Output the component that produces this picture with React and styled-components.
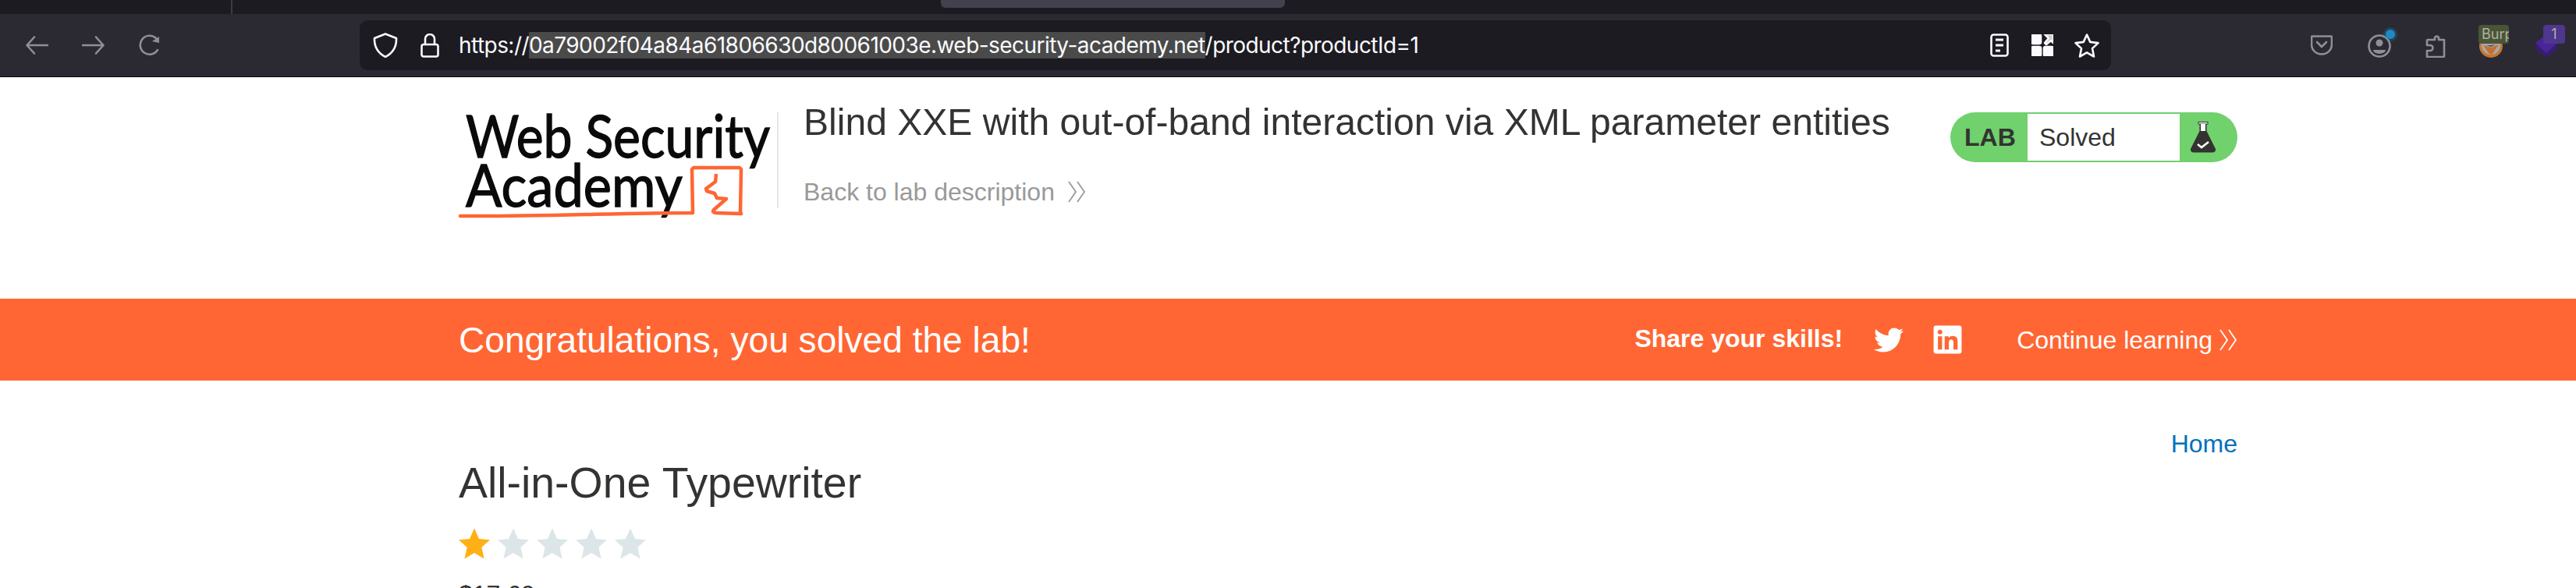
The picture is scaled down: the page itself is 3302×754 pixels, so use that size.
import React from 'react';
import styled, { createGlobalStyle } from 'styled-components';
import { FaTwitter, FaLinkedin } from 'react-icons/fa';

const Global = createGlobalStyle`
  html, body { margin: 0; padding: 0; background: #fff; height: 754px; overflow: hidden; }
  * { box-sizing: border-box; }
`;
const Page = styled.div`
  width: 3302px; height: 754px; overflow: hidden; background: #fff;
  font-family: "Liberation Sans", Arial, sans-serif; color: #333332;
`;
const TabStrip = styled.div`
  height: 18px; background: #1c1b22; display: flex; align-items: flex-start;
`;
const TabDivider = styled.div`
  width: 2px; height: 18px; margin-left: 296px; background: #3c3b44;
`;
const ActiveTab = styled.div`
  width: 441px; height: 10px; margin-left: 908px; background: #42414d; border-radius: 0 0 6px 6px;
`;
const Toolbar = styled.div`
  height: 81px; background: #2b2a33; border-bottom: 1px solid #0c0c0d;
  display: flex; align-items: center; position: relative;
`;
const NavIcon = styled.svg`
  flex: none; display: block; margin-left: ${p => p.$ml || 0}px; color: ${p => p.$c || '#8f8f94'};
  fill: none; stroke: currentColor; stroke-width: 2.6; stroke-linecap: round; stroke-linejoin: round;
`;
const AccountIcon = styled(NavIcon)`
  margin-top: 8px;
`;
const UrlBar = styled.div`
  width: 2245px; height: 64px; margin-left: 255px; background: #1c1b22; border-radius: 10px;
  display: flex; align-items: center; color: #fbfbfe; flex: none;
`;
const UrlText = styled.div`
  margin-left: 25px; font: 400 28px/33px Inter, sans-serif; white-space: pre; letter-spacing: -0.55px;
`;
const Selected = styled.span`
  background: #4a4a4a;
`;
const UrlTools = styled.div`
  margin-left: auto; padding-right: 15px; display: flex; align-items: center;
`;
const ExtSlot = styled.div`
  position: relative; flex: none; margin-left: ${p => p.$ml}px; width: ${p => p.$w}px; height: 44px;
`;
const ExtBadge = styled.div`
  position: absolute; top: -4px; left: ${p => p.$l}px; width: ${p => p.$w}px; height: 24px; overflow: hidden;
  background: ${p => p.$bg}; color: #aeb0a8; border-radius: 4px; padding-left: ${p => p.$center ? 0 : 4}px;
  font: 400 18px/24px Inter, sans-serif; white-space: nowrap;
  text-align: ${p => p.$center ? 'center' : 'left'};
`;
const ExtArt = styled.svg`
  position: absolute; top: 8px; left: ${p => p.$l}px; display: block;
`;
const Dot = styled.div`
  position: absolute; width: 12px; height: 12px; border-radius: 50%; top: 2px; right: -5px;
  background: #1d8ac4; box-shadow: 0 0 0 3px rgba(29,138,196,.25);
`;
const Container = styled.div`
  width: 2280px; margin: 0 0 0 588px;
`;
const LabHeader = styled.div`
  height: 284px; display: flex; align-items: flex-start;
`;
const LogoSvg = styled.svg`
  flex: none; display: block; margin: 42px 0 0 -4px;
`;
const LogoText = styled.text`
  font-family: Lato, "Noto Sans", sans-serif; font-weight: 400; fill: #0a0a0a; stroke: #0a0a0a; stroke-width: 1.4;
`;
const Divider = styled.div`
  flex: none; width: 2px; height: 123px; margin: 45px 0 0 8px; background: #e6e6e6;
`;
const TitleCol = styled.div`
  flex: none; width: 1440px; margin-left: 32px; padding-top: 31px;
`;
const LabTitle = styled.h2`
  margin: 0; font: 400 48.070px/52px "Liberation Sans", sans-serif; color: #333332; white-space: nowrap;
`;
const BackLink = styled.div`
  margin-top: 45px; display: flex; align-items: center; font: 400 32px/38px "Liberation Sans", sans-serif; color: #999;
`;
const Chevrons = styled.svg`
  display: block; margin-left: ${p => p.$ml}px; flex: none; fill: none; stroke: currentColor; stroke-width: 1.8;
`;
const LabWidget = styled.div`
  margin: 45px 0 0 auto; width: 368px; height: 64px; background: #70d16d; border-radius: 32px;
  display: flex; align-items: stretch; flex: none;
`;
const LabLabel = styled.div`
  width: 99px; padding-left: 18px; font: 700 32px/64px "Liberation Sans", sans-serif;
`;
const LabStatus = styled.div`
  width: 195px; margin: 2px 0; background: #fff; padding-left: 15px; font: 400 32px/60px "Liberation Sans", sans-serif;
`;
const FlaskWrap = styled.div`
  flex: 1; display: flex; align-items: center; padding-left: 14px;
`;
const Banner = styled.div`
  height: 105px; background: #ff6633; color: #fff; padding-left: 588px; display: flex; align-items: center;
`;
const BannerInner = styled.div`
  width: 2280px; display: flex; align-items: center;
`;
const Congrats = styled.div`
  font: 400 46.100px/52px "Liberation Sans", sans-serif; white-space: nowrap;
`;
const Share = styled.div`
  margin-left: auto; font: 700 32px/38px "Liberation Sans", sans-serif; white-space: nowrap; position: relative; top: -2px;
`;
const Social = styled.div`
  display: flex; margin-left: ${p => p.$ml}px; font-size: ${p => p.$s}px;
`;
const Continue = styled.div`
  margin-left: 68px; display: flex; align-items: center; font: 400 32px/38px "Liberation Sans", sans-serif; white-space: nowrap;
`;
const Content = styled.div`
  padding-top: 62px;
`;
const HomeRow = styled.div`
  display: flex; justify-content: flex-end; height: 32px;
`;
const HomeLink = styled.a`
  color: #0071bc; font: 400 32px/38px "Liberation Sans", sans-serif; text-decoration: none;
`;
const Product = styled.h3`
  margin: 0; padding-top: 5px; font: 400 55.400px/64px "Liberation Sans", sans-serif; color: #333332;
`;
const Stars = styled.div`
  margin-top: 26px; display: flex; gap: 10px;
`;
const Price = styled.div`
  margin-top: 26px; font: 400 32px/38px "Liberation Sans", sans-serif;
`;
const StarIcon = styled.svg`
  display: block; fill: ${p => p.$on ? '#ffb014' : '#dce5e8'};
`;

const Star = ({ on }) => (
  <StarIcon $on={on} width="40" height="40" viewBox="0 0 40 40">
    <path d="M20 0.5l6 13.5 14 1.2-10.6 9.6 3.2 14.7L20 32l-12.600 7.500 3.200-14.700L0 15.200l14-1.200z" />
  </StarIcon>
);

const Chev = ({ ml }) => (
  <Chevrons $ml={ml} width={24} height={28} viewBox="0 0 24 28">
    <path d="M2 1l9 13-9 13M13 1l9 13-9 13" />
  </Chevrons>
);

const Logo = () => (
  <LogoSvg width="404" height="150" viewBox="0 0 404 150">
    <LogoText x="13" y="61" fontSize="76" textLength="390" lengthAdjust="spacingAndGlyphs">Web Security</LogoText>
    <LogoText x="13" y="124" fontSize="76" textLength="278" lengthAdjust="spacingAndGlyphs">Academy</LogoText>
    <path d="M6 136c95 1 200-4 298-4l-1-56 2-2h59l2 2-1 55 1 2-33-1-2-1" fill="none" stroke="#ff6633" strokeWidth="4.500" strokeLinecap="round" strokeLinejoin="round" />
    <path d="M334 82l-1 10-12 9 1 3 10 3 3 6 12 1-16 14-1 2 2 1" fill="none" stroke="#ff6633" strokeWidth="4.500" strokeLinejoin="round" />
  </LogoSvg>
);

const Flask = () => (
  <svg width="32" height="40" viewBox="0 0 32 40">
    <rect x="10" y="0.500" width="12" height="2.500" fill="#fff" stroke="#333332" strokeWidth="1" />
    <path d="M11.500 3h9v9L32 35q.5 4-3 4.500H3q-3.500-.5-3-4.500L11.500 12z" fill="#333332" />
    <path d="M13 3h6v9h-6z" fill="#fff" />
    <path d="M9 29l5 4 9-7" fill="none" stroke="#fff" strokeWidth="2.600" />
  </svg>
);

export default function App() {
  return (
    <Page>
      <Global />
      <TabStrip>
        <TabDivider />
        <ActiveTab />
      </TabStrip>
      <Toolbar>
        <NavIcon $ml={33} width="29" height="24" viewBox="0 0 29 24"><path d="M28 12H2M11 1.500 1.500 12 11 22.500" /></NavIcon>
        <NavIcon $ml={43} width="29" height="24" viewBox="0 0 29 24"><path d="M1 12h26M18 1.500 27.500 12 18 22.500" /></NavIcon>
        <NavIcon $ml={44} width="28" height="28" viewBox="0 0 28 28"><path d="M24 20a12 12 0 1 1-2-15" /><path d="M17 9l9-6v8z" fill="currentColor" stroke="none" /></NavIcon>
        <UrlBar>
          <NavIcon $ml={17} $c="#fbfbfe" width="32" height="32" viewBox="0 0 32 32"><path d="M16 1.500 30 7c.5 11-3.500 18.500-14 24C5.500 25.500 1.500 18 2 7z" /></NavIcon>
          <NavIcon $ml={29} $c="#fbfbfe" width="24" height="31" viewBox="0 0 24 31"><path d="M6 14V7a6 6 0 0 1 12 0v7" /><rect x="1.500" y="14" width="21" height="15.500" rx="2.500" /></NavIcon>
          <UrlText>https://<Selected>0a79002f04a84a61806630d80061003e.web-security-academy.net</Selected>/product?productId=1</UrlText>
          <UrlTools>
            <NavIcon $c="#fbfbfe" width="24" height="30" viewBox="0 0 24 30"><rect x="1.500" y="1.500" width="21" height="27" rx="3" /><path d="M7 8h10M7 15h10M7 22h6" strokeWidth="2.800" strokeLinecap="butt" /></NavIcon>
            <NavIcon $ml={29} $c="#fbfbfe" width="28" height="28" viewBox="0 0 28 28" strokeWidth="0">
              <rect x="0" y="0" width="12" height="12" rx="2" fill="currentColor" />
              <rect x="0" y="16" width="12" height="12" rx="2" fill="currentColor" />
              <rect x="16" y="16" width="12" height="12" rx="2" fill="currentColor" />
              <path d="M17 0h11v11l-3-3-6 5-2-2 5-6z" fill="#c9c9c9" />
            </NavIcon>
            <NavIcon $ml={27} $c="#fbfbfe" width="32" height="31" viewBox="0 0 32 31"><path d="M16 1.500l4.300 9.400 10.200 1.200-7.500 7 2 10.400-9-5.200-9 5.200 2-10.400-7.500-7 10.200-1.200z" /></NavIcon>
          </UrlTools>
        </UrlBar>
        <NavIcon $ml={256} width="28" height="26" viewBox="0 0 28 26"><path d="M2 1.500h24a1 1 0 0 1 1 1V12a13 12.500 0 0 1-26 0V2.500a1 1 0 0 1 1-1z" /><path d="M8 9l6 6 6-6" /></NavIcon>
        <ExtSlot $ml={45} $w={30}>
          <AccountIcon width="30" height="30" viewBox="0 0 30 30"><circle cx="15" cy="15" r="13.500" /><circle cx="15" cy="11" r="4.500" fill="currentColor" stroke="none" /><path d="M7 20h16a8 5 0 0 1-16 0z" fill="currentColor" stroke="none" /></AccountIcon>
          <Dot />
        </ExtSlot>
        <NavIcon $ml={44} width="26" height="31" viewBox="0 0 26 31"><path d="M8 8h4V5a3 3 0 0 1 5 0v3h7v21a1 1 0 0 1-1 1H2v-8h4a3.500 3.500 0 0 0 0-7H2V9a1 1 0 0 1 1-1z" /></NavIcon>
        <ExtSlot $ml={42} $w={39}>
          <ExtArt $l={1} width="30" height="30" viewBox="0 0 30 30">
            <circle cx="15" cy="15" r="15" fill="#c4772f" />
            <circle cx="15" cy="14" r="12" fill="#a7a7ab" />
            <path d="M5 14l10 3 10-4-8 12c-2 1-4 0-5-1z" fill="#c66f2c" />
            <path d="M9 14l6 2 6-3-6 1z" fill="#4c4e52" />
          </ExtArt>
          <ExtBadge $bg="#4a5536" $l={0} $w={39}>Burp</ExtBadge>
        </ExtSlot>
        <ExtSlot $ml={33} $w={39}>
          <ExtArt $l={-1} width="32" height="30" viewBox="0 0 32 30">
            <path d="M16 4l16 13-16 13L0 17z" fill="#371e72" />
            <path d="M16 0l14 11-14 13L2 11z" fill="#4a2499" />
          </ExtArt>
          <ExtBadge $bg="#4e378d" $l={11} $w={28} $center>1</ExtBadge>
        </ExtSlot>
      </Toolbar>
      <Container>
        <LabHeader>
          <Logo />
          <Divider />
          <TitleCol>
            <LabTitle>Blind XXE with out-of-band interaction via XML parameter entities</LabTitle>
            <BackLink>Back to lab description<Chev ml={16} /></BackLink>
          </TitleCol>
          <LabWidget>
            <LabLabel>LAB</LabLabel>
            <LabStatus>Solved</LabStatus>
            <FlaskWrap><Flask /></FlaskWrap>
          </LabWidget>
        </LabHeader>
      </Container>
      <Banner>
        <BannerInner>
          <Congrats>Congratulations, you solved the lab!</Congrats>
          <Share>Share your skills!</Share>
          <Social $ml={40} $s={38}><FaTwitter /></Social>
          <Social $ml={36} $s={41}><FaLinkedin /></Social>
          <Continue>Continue learning<Chev ml={8} /></Continue>
        </BannerInner>
      </Banner>
      <Container>
        <Content>
          <HomeRow><HomeLink>Home</HomeLink></HomeRow>
          <Product>All-in-One Typewriter</Product>
          <Stars>
            <Star on /><Star /><Star /><Star /><Star />
          </Stars>
          <Price>$17.69</Price>
        </Content>
      </Container>
    </Page>
  );
}
